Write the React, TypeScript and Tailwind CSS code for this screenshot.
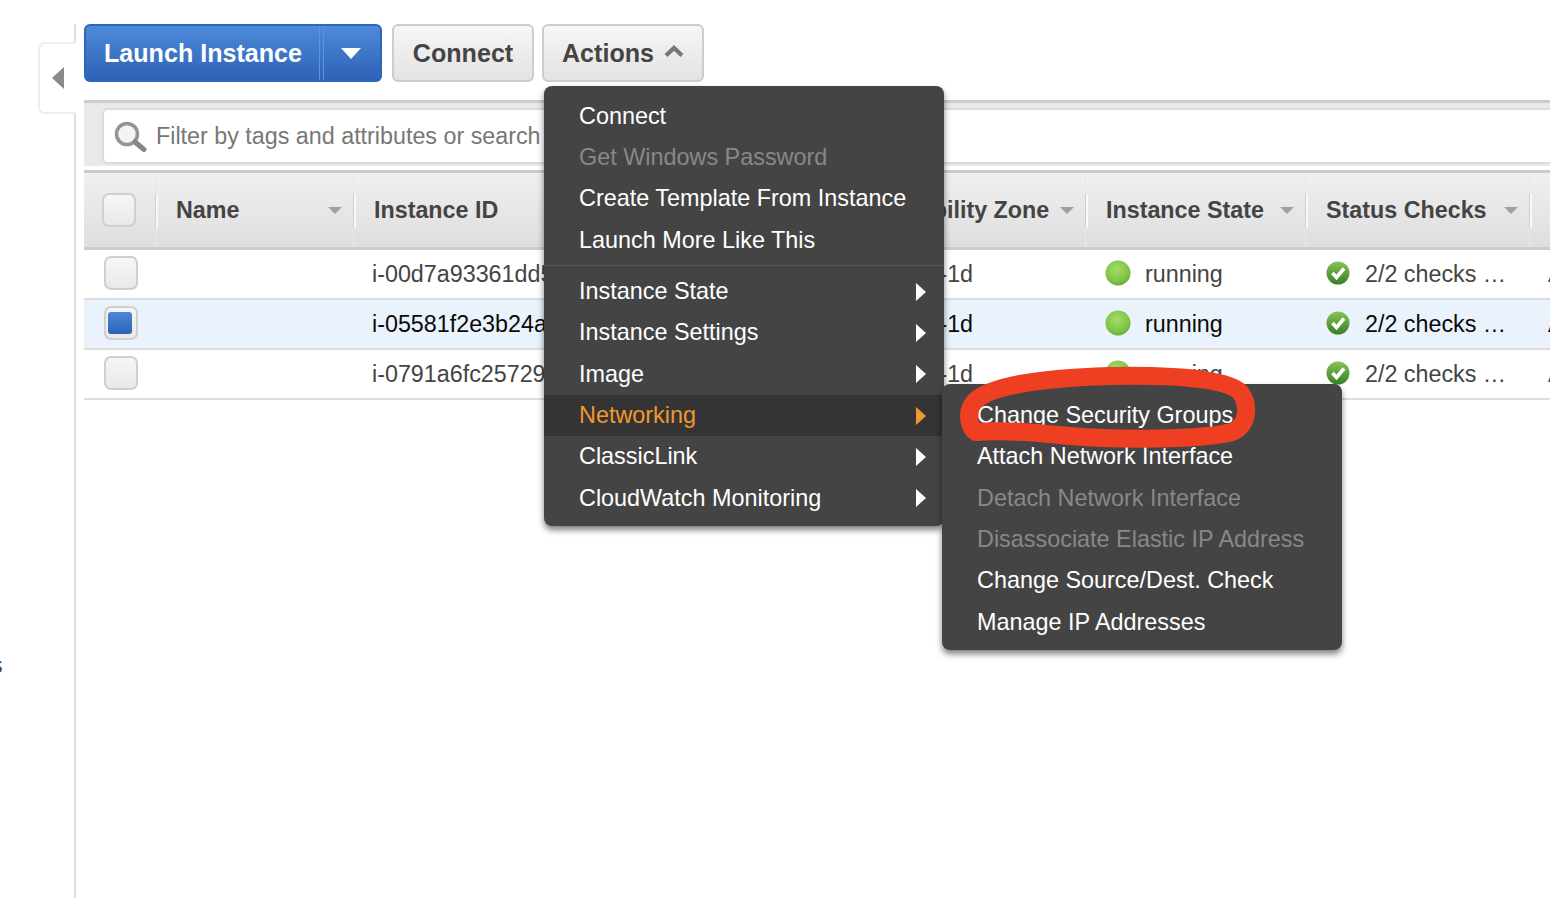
import React from 'react';

const font = "font-['Liberation_Sans',Arial,sans-serif]";

const headerCols = [
    { label: 'Name', width: 'w-[198px]', pad: 'pl-[20px]' },
    { label: 'Instance ID', width: 'w-[486px]', pad: 'pl-[20px]' },
    { label: 'Availability Zone', width: 'w-[246px]', pad: 'pl-[25px]' },
    { label: 'Instance State', width: 'w-[220px]', pad: 'pl-[20px]' },
    { label: 'Status Checks', width: 'w-[224px]', pad: 'pl-[20px]' },
];

const rows = [
    { id: 'i-00d7a93361dd5', selected: false },
    { id: 'i-05581f2e3b24a', selected: true },
    { id: 'i-0791a6fc25729', selected: false },
];

const actionItems = [
    { label: 'Connect' },
    { label: 'Get Windows Password', disabled: true },
    { label: 'Create Template From Instance' },
    { label: 'Launch More Like This' },
];

const actionSubmenus = [
    { label: 'Instance State' },
    { label: 'Instance Settings' },
    { label: 'Image' },
    { label: 'Networking', active: true },
    { label: 'ClassicLink' },
    { label: 'CloudWatch Monitoring' },
];

const networkItems = [
    { label: 'Change Security Groups' },
    { label: 'Attach Network Interface' },
    { label: 'Detach Network Interface', disabled: true },
    { label: 'Disassociate Elastic IP Address', disabled: true },
    { label: 'Change Source/Dest. Check' },
    { label: 'Manage IP Addresses' },
];

const SearchIcon = () => (
    <svg width="34" height="31" viewBox="0 0 34 31" className="shrink-0">
        <circle cx="14" cy="13" r="10.5" fill="#f4f4f4" stroke="#949494" strokeWidth="3.6" />
        <path d="M22 21 L31 28.5" stroke="#858585" strokeWidth="5" strokeLinecap="round" />
    </svg>
);

const SortArrow = () => (
    <svg width="14" height="7" viewBox="0 0 14 7" className="shrink-0">
        <path d="M0 0 H14 L7 7 Z" fill="#a0a0a0" />
    </svg>
);

const GreenDot = () => (
    <svg width="26" height="26" viewBox="0 0 26 26" className="shrink-0 -mt-[2px]">
        <defs>
            <radialGradient id="dot" cx="45%" cy="35%" r="70%">
                <stop offset="0%" stopColor="#a6dc6c" />
                <stop offset="70%" stopColor="#7cc443" />
                <stop offset="100%" stopColor="#5da52c" />
            </radialGradient>
        </defs>
        <circle cx="13" cy="13" r="12.5" fill="url(#dot)" />
    </svg>
);

const CheckIcon = () => (
    <svg width="24" height="24" viewBox="0 0 24 24" className="shrink-0 -mt-[2px]">
        <defs>
            <linearGradient id="chk" x1="0" y1="0" x2="0" y2="1">
                <stop offset="0%" stopColor="#86c455" />
                <stop offset="100%" stopColor="#357f28" />
            </linearGradient>
        </defs>
        <circle cx="12" cy="12" r="11.5" fill="url(#chk)" />
        <path d="M6.5 12 L10.5 16.5 L18 7.5" fill="none" stroke="#fff" strokeWidth="3.6" />
    </svg>
);

const Checkbox = ({ checked = false }: { checked?: boolean }) => (
    <div className="w-[34px] h-[34px] rounded-[7px] border-2 border-[#cfcfcf] bg-linear-to-b from-[#f6f6f6] to-[#e9e9e9] flex items-center pl-[2px]">
        {checked && <div className="w-[24px] h-[22px] rounded-[3px] bg-linear-to-b from-[#4d88d8] to-[#2d62b6]"></div>}
    </div>
);

const Divider = () => (
    <>
        <div className="absolute -left-[1px] top-0 bottom-0 w-[1px] bg-[#e8e8e8]"></div>
        <div className="absolute -left-[1px] top-[21px] h-[34px] w-[3px] bg-[#f9f9f9] border-l border-[#cfcfcf]"></div>
    </>
);

const MenuRow = ({ label, disabled, active, arrow }: { label: string; disabled?: boolean; active?: boolean; arrow?: boolean }) => (
    <div
        className={`h-[41.33px] pl-[35px] pr-[18px] flex items-center justify-between text-[23.4px] ${
            active ? 'bg-[#343434] text-[#f0982e]' : disabled ? 'text-[#888888]' : 'text-white'
        }`}
    >
        <span>{label}</span>
        {arrow && (
            <svg width="10" height="18" viewBox="0 0 10 18">
                <path d="M0 0 L10 9 L0 18 Z" fill={active ? '#f0982e' : '#ffffff'} />
            </svg>
        )}
    </div>
);

export default function App() {
    return (
        <div className={`${font} relative w-[1550px] h-[898px] overflow-hidden bg-white flex`}>
            {/* Sidebar edge */}
            <div className="w-[76px] shrink-0 mt-[24px] border-r-2 border-[#dddddd] relative">
                <div className="absolute left-[38px] top-[18px] w-[38px] h-[72px] rounded-l-[7px] border-2 border-r-0 border-[#eeeeee] bg-white flex items-center justify-center">
                    <svg width="12" height="22" viewBox="0 0 12 22">
                        <path d="M12 0 V22 L0 11 Z" fill="#8a8a8a" />
                    </svg>
                </div>
                <span className="absolute -left-[9px] top-[628px] text-[23.2px] leading-[26px] text-[#444444]">s</span>
            </div>

            <div className="flex-1 min-w-0 pl-2 pt-6 text-[#444444]">
                {/* Toolbar */}
                <div className="h-[58px] flex">
                    <div className="w-[298px] h-[58px] rounded-[6px] border-2 border-[#2d66bb] bg-linear-to-b from-[#4f8ad9] to-[#2d62b6] flex text-white">
                        <div className="w-[233px] flex items-center pl-[18px] pt-[1px] text-[25.1px] font-bold">Launch Instance</div>
                        <div className="w-[5px] border-x border-[#5f93dc]"></div>
                        <div className="flex-1 flex items-center justify-center pr-[3px]">
                            <svg width="20" height="11" viewBox="0 0 20 11">
                                <path d="M0 0 H20 L10 11 Z" fill="#ffffff" />
                            </svg>
                        </div>
                    </div>
                    <div className="ml-[10px] w-[142px] h-[58px] rounded-[6px] border-2 border-[#cdcdcd] bg-linear-to-b from-[#f6f6f6] to-[#e3e3e3] flex items-center justify-center pt-[1px] text-[25.1px] font-bold">
                        Connect
                    </div>
                    <div className="ml-[8px] w-[162px] h-[58px] rounded-[6px] border-2 border-[#cdcdcd] bg-linear-to-b from-[#f6f6f6] to-[#e3e3e3] flex items-center pl-[18px] pt-[1px] gap-[10px] text-[25.1px] font-bold">
                        Actions
                        <svg width="20" height="12" viewBox="0 0 20 12" className="-mt-[5px]">
                            <path d="M2 10.5 L10 3 L18 10.5" fill="none" stroke="#777777" strokeWidth="4.2" />
                        </svg>
                    </div>
                </div>

                {/* Filter bar */}
                <div className="mt-[18px] h-[66px] border-t-[3px] border-[#cccccc] bg-[#e9e9e9] pl-[18px] pt-[5px]">
                    <div className="h-[56px] rounded-l-[6px] border-2 border-r-0 border-[#dcdcdc] bg-white flex items-center pl-[9px] gap-[9px] text-[23.3px] text-[#777777]">
                        <SearchIcon />
                        <span className="pt-[1px]">Filter by tags and attributes or search</span>
                    </div>
                </div>

                {/* Table header */}
                <div className="mt-[4px] h-[80px] border-t-[3px] border-b-[3px] border-t-[#cccccc] border-b-[#cccccc] bg-linear-to-b from-[#f0f0f0] to-[#dedede] flex font-bold text-[23.3px] whitespace-nowrap">
                    <div className="w-[72px] shrink-0 pl-[18px] flex items-center">
                        <Checkbox />
                    </div>
                    {headerCols.map((col) => (
                        <div key={col.label} className={`${col.width} ${col.pad} shrink-0 flex items-center pr-[12px] justify-between relative`}>
                            <Divider />
                            <span>{col.label}</span>
                            <SortArrow />
                        </div>
                    ))}
                    <div className="w-[20px] shrink-0 relative">
                        <Divider />
                    </div>
                </div>

                {/* Rows */}
                {rows.map((row) => (
                    <div
                        key={row.id}
                        className={`h-[50px] border-b-2 border-[#dddddd] flex items-center text-[23.3px] whitespace-nowrap ${
                            row.selected ? 'bg-[#eaf3fc] text-[#0a0a0a]' : 'text-[#444444]'
                        }`}
                    >
                        <div className="w-[72px] shrink-0 pl-[20px] -mt-[2px]">
                            <Checkbox checked={row.selected} />
                        </div>
                        <div className="w-[198px] shrink-0"></div>
                        <div className="w-[486px] shrink-0 pl-[18px]">{row.id}</div>
                        <div className="w-[246px] shrink-0 pl-[23px]">us-east-1d</div>
                        <div className="w-[220px] shrink-0 pl-[19px] flex items-center gap-[14px]">
                            <GreenDot />
                            running
                        </div>
                        <div className="w-[224px] shrink-0 pl-[20px] flex items-center gap-[15px]">
                            <CheckIcon />
                            2/2 checks …
                        </div>
                        <div className="pl-[18px]">Alarm</div>
                    </div>
                ))}
            </div>

            {/* Actions menu */}
            <div className="absolute left-[544px] top-[86px] w-[400px] h-[440px] rounded-[8px] bg-[#444444] shadow-[0_4px_6px_rgba(0,0,0,0.5)] pt-[9.5px]">
                {actionItems.map((item) => (
                    <MenuRow key={item.label} label={item.label} disabled={item.disabled} />
                ))}
                <div className="my-[4.6px] h-[1px] bg-[#585858]"></div>
                {actionSubmenus.map((item) => (
                    <MenuRow key={item.label} label={item.label} active={item.active} arrow />
                ))}
            </div>

            {/* Networking submenu */}
            <div className="absolute left-[942px] top-[384px] w-[400px] h-[266px] rounded-[8px] bg-[#444444] shadow-[0_4px_6px_rgba(0,0,0,0.5)] pt-[11px]">
                {networkItems.map((item) => (
                    <MenuRow key={item.label} label={item.label} disabled={item.disabled} />
                ))}
            </div>

            {/* Hand drawn red circle */}
            <svg className="absolute left-0 top-0 pointer-events-none" width="1550" height="898" viewBox="0 0 1550 898">
                <path
                    d="M976 432 C968 427 966 410 975 401 C990 386 1040 378 1110 376 C1170 375 1225 378 1240 392 C1250 405 1248 426 1232 432 C1200 440 1120 440 1070 436 C1040 433 1010 430 976 432"
                    fill="none"
                    stroke="#ee3f22"
                    strokeWidth="18"
                    strokeLinecap="round"
                    strokeLinejoin="round"
                />
            </svg>
        </div>
    );
}
